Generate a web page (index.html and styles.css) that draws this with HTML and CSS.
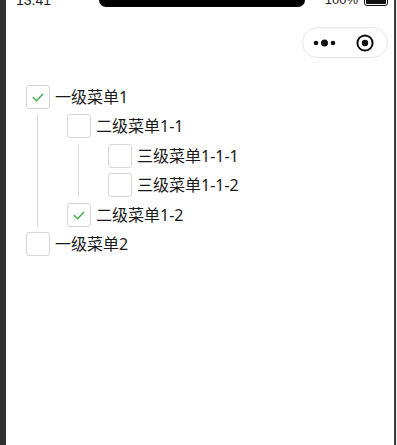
FILE: index.html
```html
<!DOCTYPE html>
<html lang="zh-CN">
<head>
  <meta charset="UTF-8">
  <title>树形菜单</title>
  <link rel="stylesheet" href="styles.css">
</head>
<body>

  <div class="phone">
    <div class="statusbar">
      <div class="status-left">
        <span class="time">13:41</span>
      </div>
      <div class="notch"></div>
      <div class="status-right">
        <span class="battery-text">100%</span>
        <span class="battery"><span class="battery-level"></span></span>
      </div>
    </div>

    <div class="navbar">
      <div class="capsule">
        <svg class="capsule-more" width="26" height="10" viewBox="0 0 26 10">
          <circle cx="3" cy="5" r="2.3" fill="#111"/>
          <circle cx="11.5" cy="5" r="3.5" fill="#111"/>
          <circle cx="20" cy="5" r="2.3" fill="#111"/>
        </svg>
        <svg class="capsule-close" width="20" height="20" viewBox="0 0 20 20">
          <circle cx="10" cy="10" r="7.6" fill="none" stroke="#111" stroke-width="2"/>
          <circle cx="10" cy="10" r="3.2" fill="#111"/>
        </svg>
      </div>
    </div>

    <div class="tree">
      <div class="node">
        <div class="row">
          <span class="checkbox checked"><svg viewBox="0 0 24 24"><polyline points="6.8,12.6 10.4,16 17.2,9" /></svg></span>
          <span class="label">一级菜单1</span>
        </div>
        <div class="children">
          <div class="node">
            <div class="row">
              <span class="checkbox"></span>
              <span class="label">二级菜单1-1</span>
            </div>
            <div class="children">
              <div class="row">
                <span class="checkbox"></span>
                <span class="label">三级菜单1-1-1</span>
              </div>
              <div class="row">
                <span class="checkbox"></span>
                <span class="label">三级菜单1-1-2</span>
              </div>
            </div>
          </div>
          <div class="row">
            <span class="checkbox checked"><svg viewBox="0 0 24 24"><polyline points="6.8,12.6 10.4,16 17.2,9" /></svg></span>
            <span class="label">二级菜单1-2</span>
          </div>
        </div>
      </div>
      <div class="row">
        <span class="checkbox"></span>
        <span class="label">一级菜单2</span>
      </div>
    </div>
  </div>

</body>
</html>
```

FILE: styles.css
```css
* {
  margin: 0;
  padding: 0;
  box-sizing: border-box;
}

html {
  background: #e8e8e8;
}

body {
  font-family: "Noto Sans", "Noto Sans CJK SC", sans-serif;
  color: #1a1a1a;
  height: 100vh;
  overflow: hidden;
}

.phone {
  height: 100vh;
  margin-right: 1px;
  background: #fff;
  border-left: 6px solid #313131;
  border-right: 2px solid #3c3c3c;
}

/* status bar, cut at the top */
.statusbar {
  display: flex;
  align-items: flex-end;
  height: 7px;
  overflow: hidden;
}

.status-left,
.status-right {
  flex: 1;
  display: flex;
  align-items: flex-end;
}

.status-left {
  padding-left: 10px;
}

.status-right {
  justify-content: flex-end;
  gap: 6px;
  padding-right: 6px;
}

.time {
  font-family: "Liberation Sans", sans-serif;
  font-size: 14px;
  line-height: 14px;
}

.notch {
  flex-shrink: 0;
  width: 206px;
  height: 7px;
  background: #000;
  border-radius: 0 0 12px 12px;
}

.battery-text {
  font-family: "Liberation Sans", sans-serif;
  font-size: 13px;
  line-height: 13px;
  margin-bottom: 1px;
  color: #222;
}

.battery {
  width: 24px;
  height: 12px;
  border: 1px solid #111;
  border-radius: 3px;
  padding: 1px;
  margin-bottom: 1px;
}

.battery-level {
  display: block;
  height: 100%;
  background: #111;
  border-radius: 1px;
}

.navbar {
  display: flex;
  justify-content: flex-end;
  padding: 20px 6px 0 0;
}

.capsule {
  width: 86px;
  height: 31px;
  border: 1px solid #e6e6e6;
  border-radius: 16px;
  display: flex;
  align-items: center;
  justify-content: space-between;
  padding: 0 12px 0 10px;
}

.capsule-more,
.capsule-close {
  display: block;
}

/* tree */
.tree {
  display: flex;
  flex-direction: column;
  gap: 5.4px;
  padding: 27px 0 0 20px;
}

.node {
  display: flex;
  flex-direction: column;
  gap: 5.4px;
}

.children {
  display: flex;
  flex-direction: column;
  gap: 5.4px;
  margin-left: 11px;
  padding-left: 29px;
  border-left: 1px solid #d9d9d9;
}

.row {
  display: flex;
  align-items: center;
  height: 24px;
}

.checkbox {
  width: 24px;
  height: 24px;
  flex-shrink: 0;
  border: 1px solid #d6d6d6;
  border-radius: 3px;
  background: #fff;
}

.checkbox svg {
  display: block;
  width: 22px;
  height: 22px;
}

.checkbox polyline {
  fill: none;
  stroke: #3fae45;
  stroke-width: 1.5;
  stroke-linecap: round;
  stroke-linejoin: round;
}

.label {
  margin-left: 5px;
  font-size: 16px;
  line-height: 24px;
  white-space: nowrap;
}
```
